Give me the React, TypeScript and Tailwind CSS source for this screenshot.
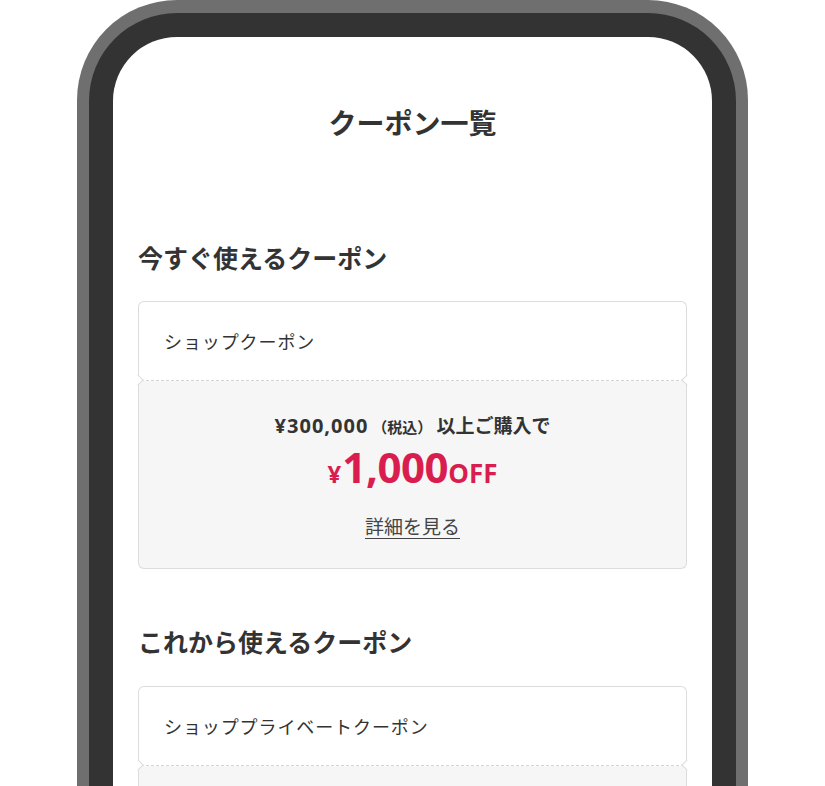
const font = { fontFamily: '"Noto Sans CJK JP", "Noto Sans", sans-serif' }
const latin = { fontFamily: '"Open Sans", "Noto Sans CJK JP", sans-serif' }

function Coupon({ name, detail }: { name: string; detail?: boolean }) {
  return (
    <div className="relative">
      <div className="h-[79px] rounded-t-[6px] border border-b-0 border-[#dcdcdc] bg-white flex items-center px-[25px]">
        <span className="text-[18px] tracking-[0.05em] text-[#333]">{name}</span>
      </div>
      <div className="absolute left-[-4px] top-[75px] w-[8px] h-[8px] rotate-45 bg-white border-t border-r border-[#dcdcdc]" />
      <div className="absolute right-[-4px] top-[75px] w-[8px] h-[8px] rotate-45 bg-white border-b border-l border-[#dcdcdc]" />
      <div className="border-t border-dashed border-[#d4d4d4] mx-[3px]" />
      <div className="rounded-b-[6px] border border-t-0 border-[#dcdcdc] bg-[#f6f6f6] flex flex-col items-center pt-[31px] pb-[29px] min-h-[100px]">
        {detail && (
          <>
            <div className="text-[19px] leading-[26px] font-bold text-[#333]">
              <span className="text-[20px] tracking-[0.05em]" style={latin}>¥300,000</span>
              <span className="text-[15px] mx-[4px]">（税込）</span>以上ご購入で
            </div>
            <div className="mt-[5px] leading-[44px] font-bold text-[#d91e4f] flex items-baseline" style={latin}>
              <span className="text-[24px] mr-[1px]">¥</span>
              <span className="text-[42px] tracking-[-0.01em]">1,000</span>
              <span className="text-[26px]">OFF</span>
            </div>
            <a className="mt-[17px] text-[19px] leading-[26px] text-[#444] underline underline-offset-[4px] decoration-[1px]">
              詳細を見る
            </a>
          </>
        )}
      </div>
    </div>
  )
}

export default function App() {
  return (
    <div className="w-[825px] h-[786px] overflow-hidden bg-white" style={font}>
      <div className="ml-[77px] w-[671px] h-[900px] bg-[#6f6f6f] rounded-t-[100px] pt-[13px] px-[12px]">
        <div className="h-full bg-[#333333] rounded-t-[88px] pt-[24px] px-[24px]">
          <div className="h-full bg-white rounded-t-[64px] px-[25px] pt-[65px]">
            <h1 className="text-center text-[28px] leading-[40px] font-bold text-[#333]">クーポン一覧</h1>

            <h2 className="mt-[97px] text-[25px] leading-[36px] font-bold text-[#333]">今すぐ使えるクーポン</h2>
            <div className="mt-[26px]">
              <Coupon name="ショップクーポン" detail />
            </div>

            <h2 className="mt-[54px] text-[25px] leading-[36px] font-bold text-[#333]">これから使えるクーポン</h2>
            <div className="mt-[27px]">
              <Coupon name="ショッププライベートクーポン" />
            </div>
          </div>
        </div>
      </div>
    </div>
  )
}
